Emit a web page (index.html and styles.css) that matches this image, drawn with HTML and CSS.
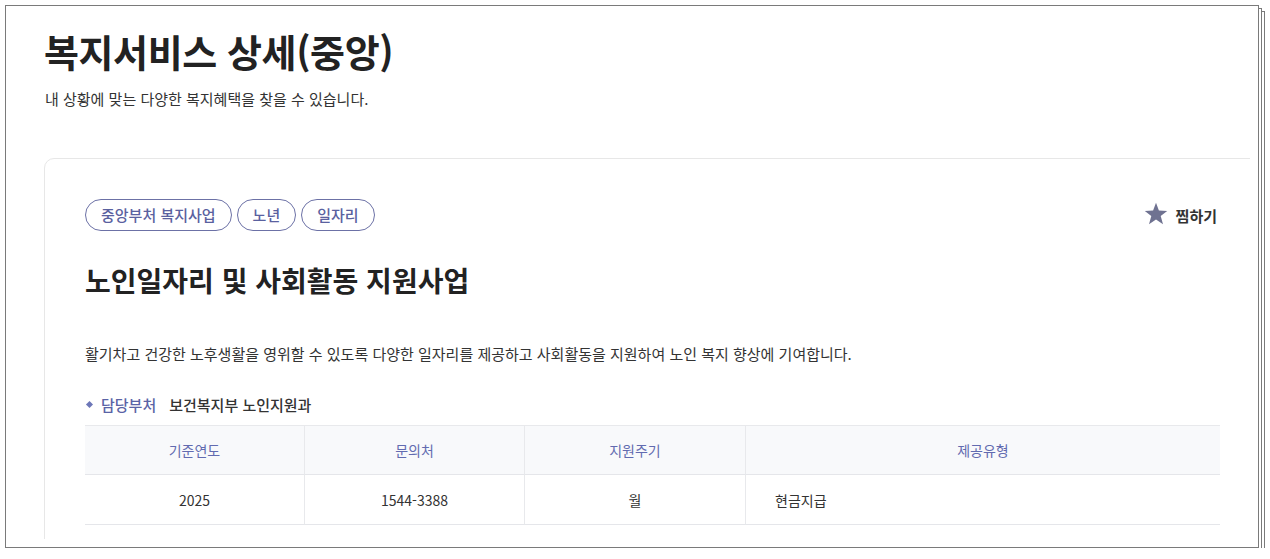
FILE: index.html
```html
<!DOCTYPE html>
<html lang="ko">
<head>
<meta charset="utf-8">
<title>복지서비스 상세(중앙)</title>
<link rel="stylesheet" href="styles.css">
</head>
<body>
<div class="sheet">
  <div class="viewport">
    <header class="page-head">
      <h1 class="page-title">복지서비스 상세(중앙)</h1>
      <p class="page-sub">내 상황에 맞는 다양한 복지혜택을 찾을 수 있습니다.</p>
    </header>
    <section class="card">
      <div class="card-top">
        <ul class="tags">
          <li class="tag">중앙부처 복지사업</li>
          <li class="tag">노년</li>
          <li class="tag">일자리</li>
        </ul>
        <button class="fav" type="button">
          <svg class="fav-icon" viewBox="0 0 24 24" width="24" height="24" aria-hidden="true"><polygon points="12,0.8 14.9,8.6 23.2,8.9 16.7,14 19,22.3 12,17.6 5,22.3 7.3,14 0.8,8.9 9.1,8.6" fill="#6f7291"/></svg>
          <span>찜하기</span>
        </button>
      </div>
      <h2 class="svc-title">노인일자리 및 사회활동 지원사업</h2>
      <p class="svc-desc">활기차고 건강한 노후생활을 영위할 수 있도록 다양한 일자리를 제공하고 사회활동을 지원하여 노인 복지 향상에 기여합니다.</p>
      <div class="dept">
        <span class="dept-dot"></span>
        <span class="dept-label">담당부처</span>
        <span class="dept-value">보건복지부 노인지원과</span>
      </div>
      <div class="info-table">
        <div class="th">기준연도</div>
        <div class="th">문의처</div>
        <div class="th">지원주기</div>
        <div class="th">제공유형</div>
        <div class="td">2025</div>
        <div class="td">1544-3388</div>
        <div class="td">월</div>
        <div class="td td-left">현금지급</div>
      </div>
    </section>
  </div>
</div>
</body>
</html>
```
FILE: styles.css
```css
* { box-sizing: border-box; }
html, body { margin: 0; padding: 0; background: #fff; }
body {
  font-family: "Noto Sans CJK KR", "Noto Sans", "Liberation Sans", sans-serif;
  color: #333;
}
.sheet {
  margin: 5px 0 0 5px;
  width: 1254px;
  height: 543px;
  border: 1px solid #7a7a7a;
  background: #fff;
  padding: 8px;
  box-shadow:
    3px 3px 0 -1px #fff,
    3px 3px 0 0 #7a7a7a,
    6px 6px 0 -1px #fff,
    6px 6px 0 0 #7a7a7a;
}
.viewport {
  width: 100%;
  height: 100%;
  overflow: hidden;
  padding-left: 30px;
}
.page-head { padding-top: 14px; }
.page-title {
  margin: 0;
  font-size: 38px;
  line-height: 46px;
  font-weight: 700;
  letter-spacing: -0.4px;
  color: #222;
}
.page-sub {
  margin: 14px 0 0 1px;
  font-size: 15px;
  line-height: 22px;
  color: #333;
}
.card {
  margin-top: 48px;
  width: 1217px;
  height: 420px;
  border: 1px solid #e7e7e7;
  border-radius: 10px;
  padding: 40px;
}
.card-top {
  display: flex;
  align-items: center;
  justify-content: space-between;
}
.tags {
  display: flex;
  gap: 5px;
  list-style: none;
  margin: 0;
  padding: 0;
}
.tag {
  height: 32px;
  line-height: 30px;
  padding: 0 15px;
  border: 1px solid #6c71a6;
  border-radius: 16px;
  font-size: 15px;
  font-weight: 500;
  color: #5a619f;
}
.fav {
  display: flex;
  align-items: center;
  gap: 8px;
  border: 0;
  background: none;
  padding: 0;
  margin-right: 3px;
  font-family: inherit;
  font-size: 15px;
  font-weight: 700;
  color: #333;
}
.fav-icon { display: block; margin-top: -3px; }
.svc-title {
  margin: 31px 0 0;
  font-size: 28px;
  line-height: 36px;
  font-weight: 700;
  color: #222;
}
.svc-desc {
  margin: 45px 0 0;
  font-size: 15px;
  line-height: 22px;
  color: #333;
}
.dept {
  display: flex;
  align-items: center;
  margin-top: 28px;
  height: 22px;
  font-size: 15px;
}
.dept-dot {
  width: 5px;
  height: 5px;
  background: #6d77b8;
  transform: rotate(45deg);
  margin: 0 9px 0 2px;
}
.dept-label {
  font-weight: 500;
  color: #5a63a6;
  margin-right: 13px;
}
.dept-value {
  font-weight: 500;
  color: #333;
}
.info-table {
  margin-top: 10px;
  display: grid;
  grid-template-columns: 219px 220px 221px 1fr;
  border-top: 1px solid #e8e9ec;
}
.th, .td {
  display: flex;
  align-items: center;
  justify-content: center;
  font-size: 14px;
  border-bottom: 1px solid #e5e6ea;
}
.th {
  height: 49px;
  background: #f8f9fb;
  color: #626bb0;
}
.td {
  height: 50px;
  color: #333;
}
.th + .th, .td + .td { border-left: 1px solid #e8e9ec; }
.td-left {
  justify-content: flex-start;
  padding-left: 29px;
}
```
